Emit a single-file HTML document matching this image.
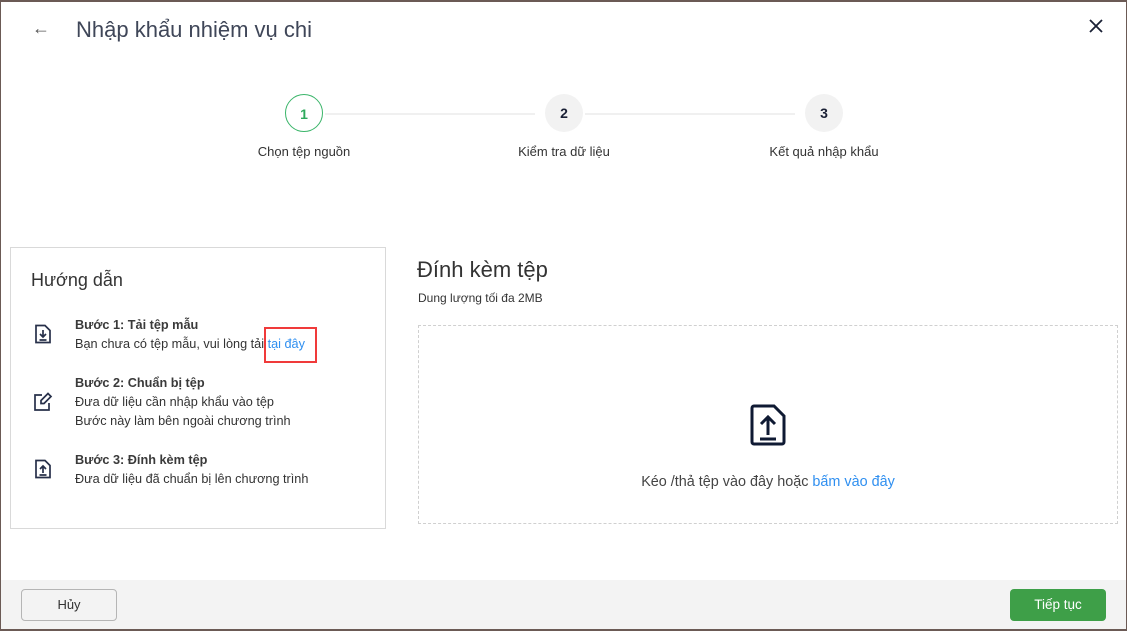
<!DOCTYPE html>
<html><head><meta charset="utf-8"><style>
*{box-sizing:border-box;margin:0;padding:0}
body{width:1127px;height:631px;overflow:hidden;font-family:"Liberation Sans",sans-serif;background:#fff;position:relative;color:#212121}
.frame{position:absolute;left:0;top:0;width:1127px;height:631px;border:1px solid #6b5a55;border-top-width:2px;border-bottom-width:2px}
.abs{position:absolute}
.title{left:76px;top:17px;font-size:22px;color:#3f4658;}
.circ{width:38px;height:38px;border-radius:50%;text-align:center;line-height:38px;font-size:14px;font-weight:bold}
.lbl{font-size:13px;color:#333;text-align:center;width:200px}
.line{height:2px;background:#f0f0f0;top:113px}
.box{left:10px;top:247px;width:376px;height:282px;border:1px solid #d9d9d9}
.st{font-size:12.7px;line-height:19px;color:#333}
.st b{font-weight:bold;color:#3a3a3a}
.drop{left:418px;top:325px;width:700px;height:199px;border:1px dashed #d0d0d0}
.foot{left:1px;top:580px;width:1125px;height:49px;background:#f3f3f3}
</style></head><body>
<div class="abs" style="left:32px;top:18px;font-size:18px;color:#555">&#8592;</div>
<div class="abs title">Nhập khẩu nhiệm vụ chi</div>
<svg class="abs" style="left:1088px;top:18px" width="16" height="16" viewBox="0 0 16 16"><path d="M2 2L14 14M14 2L2 14" stroke="#1a2035" stroke-width="1.8"/></svg>

<div class="abs line" style="left:325px;width:210px"></div>
<div class="abs line" style="left:585px;width:210px"></div>
<div class="abs circ" style="left:285px;top:94px;border:1.5px solid #3bb56a;color:#2eaa5c">1</div>
<div class="abs circ" style="left:545px;top:94px;background:#f2f2f2;color:#1a2035">2</div>
<div class="abs circ" style="left:805px;top:94px;background:#f2f2f2;color:#1a2035">3</div>
<div class="abs lbl" style="left:204px;top:144px">Chọn tệp nguồn</div>
<div class="abs lbl" style="left:464px;top:144px">Kiểm tra dữ liệu</div>
<div class="abs lbl" style="left:724px;top:144px">Kết quả nhập khẩu</div>

<div class="abs box"></div>
<div class="abs" style="left:31px;top:270px;font-size:18px;color:#333">Hướng dẫn</div>
<svg class="abs" style="left:34px;top:324px" width="18" height="20" viewBox="0 0 18 20" fill="none" stroke="#27304a" stroke-width="1.7"><path d="M2 1.5h9l5 5v12H2z"/><path d="M9 6v7M6 10l3 3 3-3M5.5 16h7"/></svg>
<div class="abs st" style="left:75px;top:316px"><b>Bước 1: Tải tệp mẫu</b><br>Bạn chưa có tệp mẫu, vui lòng tải <span style="color:#2f8ff0">tại đây</span></div>
<div class="abs" style="left:264px;top:327px;width:53px;height:36px;border:2px solid #f03a3a"></div>
<svg class="abs" style="left:33px;top:392px" width="20" height="20" viewBox="0 0 20 20" fill="none" stroke="#27304a" stroke-width="1.7"><path d="M9 3H2v15h14v-7"/><path d="M15 1.5l3 3-7 7H8v-3z"/></svg>
<div class="abs st" style="left:75px;top:374px"><b>Bước 2: Chuẩn bị tệp</b><br>Đưa dữ liệu cần nhập khẩu vào tệp<br>Bước này làm bên ngoài chương trình</div>
<svg class="abs" style="left:34px;top:459px" width="18" height="20" viewBox="0 0 18 20" fill="none" stroke="#27304a" stroke-width="1.7"><path d="M2 1.5h9l5 5v12H2z"/><path d="M9 14V7M6 10l3-3 3 3M5.5 16h7"/></svg>
<div class="abs st" style="left:75px;top:451px"><b>Bước 3: Đính kèm tệp</b><br>Đưa dữ liệu đã chuẩn bị lên chương trình</div>

<div class="abs" style="left:417px;top:257px;font-size:22px;color:#333">Đính kèm tệp</div>
<div class="abs" style="left:418px;top:291px;font-size:12px;color:#333">Dung lượng tối đa 2MB</div>
<div class="abs drop"></div>
<svg class="abs" style="left:749px;top:404px" width="38" height="42" viewBox="0 0 38 42" fill="none" stroke="#0f1a33" stroke-width="3"><path d="M3 4a2 2 0 0 1 2-2h20l10 10v26a2 2 0 0 1-2 2H5a2 2 0 0 1-2-2z"/><path d="M19 31V13M12 20l7-7 7 7M11 35h16"/></svg>
<div class="abs" style="left:418px;top:474px;width:700px;text-align:center;font-size:14.4px;color:#444">Kéo /thả tệp vào đây hoặc <span style="color:#2f8ff0">bấm vào đây</span></div>

<div class="abs foot"></div>
<div class="abs" style="left:21px;top:589px;width:96px;height:32px;border:1px solid #b5b5b5;border-radius:4px;background:#f3f3f3;text-align:center;line-height:30px;font-size:13px;color:#333">Hủy</div>
<div class="abs" style="left:1010px;top:589px;width:96px;height:32px;border-radius:4px;background:#3e9f48;text-align:center;line-height:32px;font-size:13.5px;color:#fff">Tiếp tục</div>
<div class="frame"></div>
</body></html>
